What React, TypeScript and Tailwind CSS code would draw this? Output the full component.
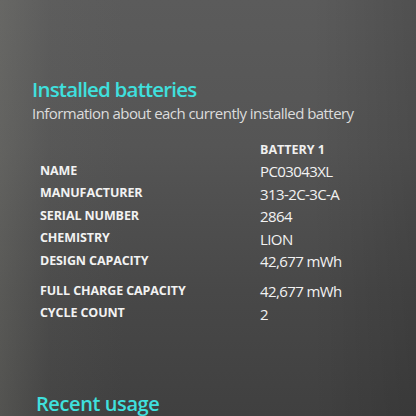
export default function App() {
  const rows: { label: string; value: string; gap?: boolean }[] = [
    { label: "NAME", value: "PC03043XL" },
    { label: "MANUFACTURER", value: "313-2C-3C-A" },
    { label: "SERIAL NUMBER", value: "2864" },
    { label: "CHEMISTRY", value: "LION" },
    { label: "DESIGN CAPACITY", value: "42,677 mWh" },
    { label: "FULL CHARGE CAPACITY", value: "42,677 mWh", gap: true },
    { label: "CYCLE COUNT", value: "2" },
  ];

  return (
    <div className="relative w-[416px] h-[416px] overflow-hidden bg-[linear-gradient(180deg,#5b5b5b_0%,#555555_35%,#484848_70%,#404040_100%)] font-['Open_Sans','Noto_Sans',sans-serif]">
      {/* soft light fall-off toward the left edge */}
      <div className="absolute inset-0 bg-[linear-gradient(90deg,rgba(140,140,130,0.25)_0%,rgba(120,120,115,0.08)_12%,rgba(0,0,0,0)_30%,rgba(0,0,0,0)_75%,rgba(0,0,0,0.12)_100%)]" />

      <div className="relative flex flex-col pt-[75px] pl-[32px]">
        <h1 className="text-[20.5px] leading-[28px] font-semibold text-[#3fe0de] tracking-[-0.8px]">
          Installed batteries
        </h1>
        <p className="text-[15px] leading-[20px] text-[#dcdcdc] tracking-[-0.55px]">
          Information about each currently installed battery
        </p>

        <div className="mt-[17px] pl-[8px] flex flex-col">
          <div className="flex items-center h-[20px]">
            <div className="w-[220px]" />
            <div className="text-[12.5px] font-bold text-[#f0f0f0]">BATTERY 1</div>
          </div>
          {rows.map((r) => (
            <div
              key={r.label}
              className={`flex items-center h-[22.5px] ${r.gap ? "mt-[7.5px]" : ""}`}
            >
              <div className="w-[220px] text-[12.5px] font-bold text-[#f2f2f2] tracking-[-0.1px]">
                {r.label}
              </div>
              <div className="text-[15px] text-[#f2f2f2] tracking-[-0.6px]">{r.value}</div>
            </div>
          ))}
        </div>

        <h2 className="mt-[66px] ml-[4px] text-[20px] leading-[26px] font-semibold text-[#3fe0de] tracking-[-0.4px]">
          Recent usage
        </h2>
      </div>
    </div>
  );
}
